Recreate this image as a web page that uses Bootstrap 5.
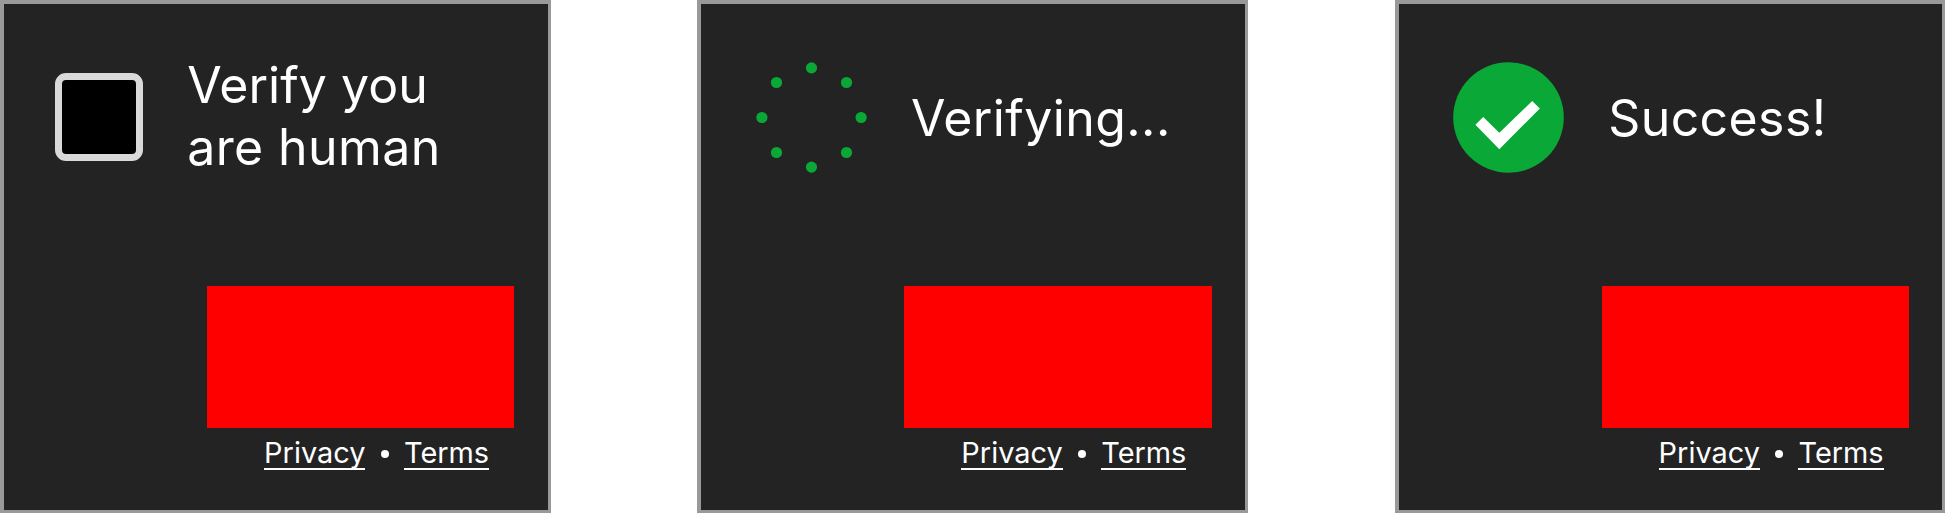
<!DOCTYPE html>
<html lang="en">
<head>
<meta charset="utf-8">
<title>Verification widget states</title>
<link rel="stylesheet" href="https://cdn.jsdelivr.net/npm/bootstrap@5.3.0/dist/css/bootstrap.min.css">
<style>
body{background:#fff;font-family:Inter,"Liberation Sans",sans-serif;overflow:hidden}
.states{height:513px}
.widget{width:550.5px;height:513px;background:#232323;border:4px solid #999;border-width:4px 3px 3px 4px;color:#fff}
.challenge{height:226.8px}
.state-icon{margin-left:54.4px;margin-right:44.3px;width:111px;height:111px}
.check-box{margin-left:51px;margin-right:44.2px;width:88px;height:88px;border:7px solid #d9d9d9;border-radius:11px;background:#000}
.message{font-size:50px;line-height:62px;letter-spacing:.4px;padding-top:2px}
.two-line{padding:0 0 2px}
.line-one{letter-spacing:.05px}
.logo-block{width:307.3px;height:142px;background:#f00;margin-top:55px;margin-right:33.1px}
.legal{margin-right:58.4px;margin-top:10px;font-size:28.9px;line-height:29.5px}
.legal a{color:#fff;text-decoration:none;border-bottom:2px solid #fff;height:31.8px}
.bullet-dot{width:8px;height:8px;background:#fff;margin:0 15px 0 15.6px}
</style>
<script src="https://cdn.jsdelivr.net/npm/bootstrap@5.3.0/dist/js/bootstrap.bundle.min.js"></script>
</head>
<body>
<main class="states d-flex justify-content-between">
  <section class="widget d-flex flex-column align-items-end">
    <div class="challenge w-100 d-flex align-items-center">
      <div class="check-box flex-shrink-0" role="checkbox" aria-checked="false"></div>
      <div class="message two-line"><span class="line-one">Verify you</span><br>are human</div>
    </div>
    <div class="logo-block"></div>
    <div class="legal d-flex align-items-center"><a href="#">Privacy</a><span class="bullet-dot rounded-circle"></span><a href="#">Terms</a></div>
  </section>
  <section class="widget d-flex flex-column align-items-end">
    <div class="challenge w-100 d-flex align-items-center">
      <svg class="state-icon flex-shrink-0" viewBox="0 0 111 111" fill="#0aa937">
        <circle cx="55.5" cy="5.9" r="5.6"/><circle cx="90.5" cy="20.5" r="5.6"/><circle cx="105.1" cy="55.5" r="5.6"/><circle cx="90.5" cy="90.5" r="5.6"/>
        <circle cx="55.5" cy="105.1" r="5.6"/><circle cx="20.5" cy="90.5" r="5.6"/><circle cx="5.9" cy="55.5" r="5.6"/><circle cx="20.5" cy="20.5" r="5.6"/>
      </svg>
      <div class="message">Verifying...</div>
    </div>
    <div class="logo-block"></div>
    <div class="legal d-flex align-items-center"><a href="#">Privacy</a><span class="bullet-dot rounded-circle"></span><a href="#">Terms</a></div>
  </section>
  <section class="widget d-flex flex-column align-items-end">
    <div class="challenge w-100 d-flex align-items-center">
      <svg class="state-icon flex-shrink-0" viewBox="0 0 111 111">
        <circle cx="55.5" cy="55.5" r="55.3" fill="#0aa937"/>
        <path d="M22.4 62.7 30.2 55 46.3 70.7 79.2 39.1 86.8 46.5 46.3 87.2Z" fill="#fff"/>
      </svg>
      <div class="message">Success!</div>
    </div>
    <div class="logo-block"></div>
    <div class="legal d-flex align-items-center"><a href="#">Privacy</a><span class="bullet-dot rounded-circle"></span><a href="#">Terms</a></div>
  </section>
</main>
</body>
</html>
